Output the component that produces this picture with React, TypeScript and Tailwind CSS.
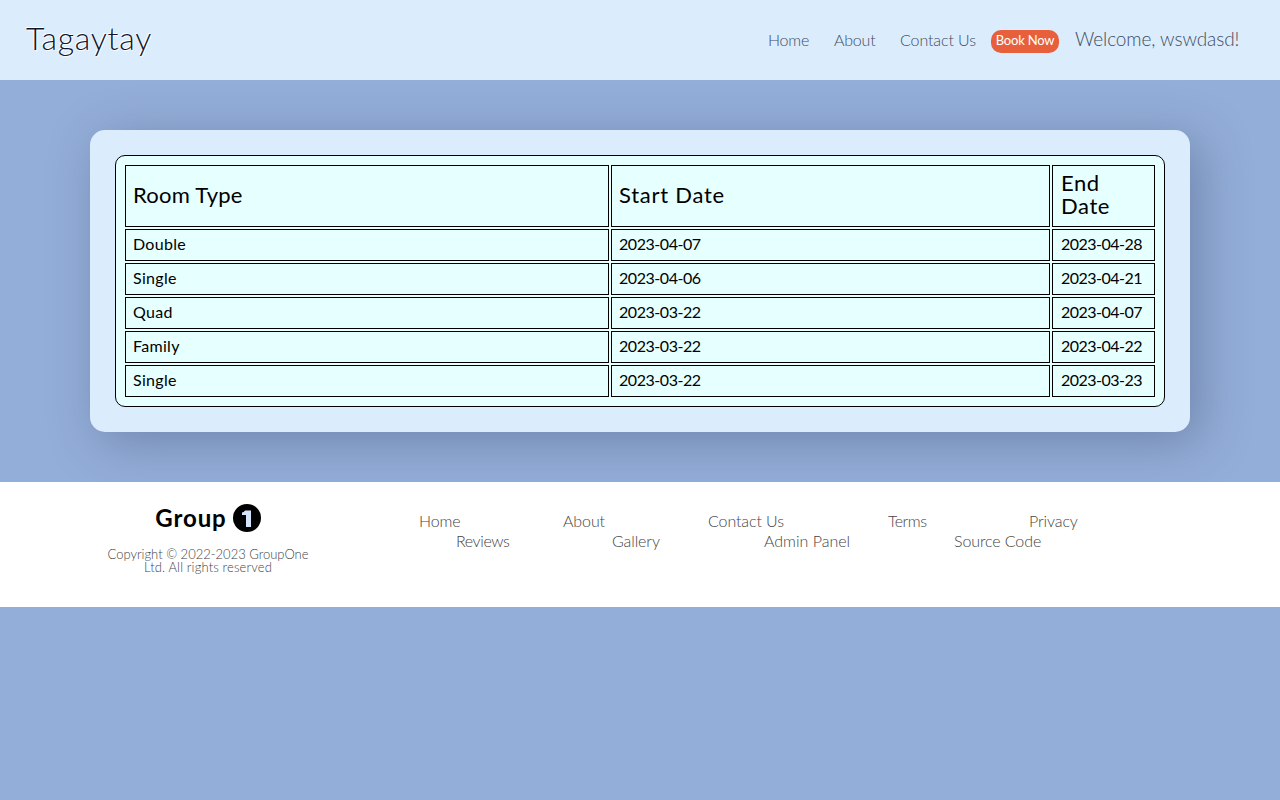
import React from "react";

const rows = [
  ["Double", "2023-04-07", "2023-04-28"],
  ["Single", "2023-04-06", "2023-04-21"],
  ["Quad", "2023-03-22", "2023-04-07"],
  ["Family", "2023-03-22", "2023-04-22"],
  ["Single", "2023-03-22", "2023-03-23"],
];

const rowGrid = "grid grid-cols-[484px_439px_103px] gap-[2px]";
const cell = "flex items-center border border-black whitespace-nowrap";

export default function App() {
  return (
    <div className="min-h-screen bg-[#93aed9] font-['Lato','Liberation_Sans',sans-serif] text-black">
      <header className="flex h-20 items-center bg-[#dbecfd] pl-[26px] font-light whitespace-nowrap text-[#3f4c5e]">
        <div className="w-[742px] pb-1 text-[32px] leading-8 tracking-[0.75px] text-[#10152c] [text-shadow:-1px_-1px_0_#fff,1px_1px_1px_#fff]">
          Tagaytay
        </div>
        <nav className="flex items-center text-[16px] leading-4 tracking-[-0.2px]">
          <a className="w-[66px]">Home</a>
          <a className="w-[66px]">About</a>
          <a className="w-[91px] tracking-[-0.1px]">Contact Us</a>
        </nav>
        <button className="mt-[3px] h-[23px] w-[68px] rounded-[10px] bg-[#e85f3c] pb-[2px] text-[13px] leading-[21px] font-normal tracking-[-0.2px] text-white">
          Book Now
        </button>
        <span className="ml-4 pb-[3px] text-[19px] leading-5 tracking-[-0.1px]">Welcome, wswdasd!</span>
      </header>

      <main className="h-[402px] overflow-hidden px-[90px] pt-[50px]">
        <section className="h-[302px] rounded-[15px] bg-[#dbecfd] p-[25px] shadow-[10px_10px_50px_rgba(50,60,90,0.35)]">
          <div className="flex h-[252px] flex-col gap-[2px] rounded-[10px] border border-black bg-[#e6ffff] p-[9px]">
            <div className={`${rowGrid} h-[62px] text-[22px] leading-[23px]`}>
              <div className={`${cell} pb-1 pl-[7px] tracking-[0.25px]`}>Room Type</div>
              <div className={`${cell} pb-1 pl-[7px] tracking-[0.75px]`}>Start Date</div>
              <div className={`${cell} pb-1 pl-2 tracking-[0.6px]`}>
                <span>
                  End
                  <br />
                  Date
                </span>
              </div>
            </div>
            {rows.map(([room, start, end], index) => (
              <div key={index} className={`${rowGrid} h-8 text-[16px] leading-4`}>
                <div className={`${cell} pb-[2px] pl-[7px] tracking-[0.3px]`}>{room}</div>
                <div className={`${cell} pb-[2px] pl-[7px] tracking-[-0.45px]`}>{start}</div>
                <div className={`${cell} pb-[2px] pl-2 tracking-[-0.5px]`}>{end}</div>
              </div>
            ))}
          </div>
        </section>
      </main>

      <footer className="flex h-[125px] bg-white font-light text-[#444]">
        <div className="ml-[90px] flex w-[236px] flex-col items-center pt-[22px]">
          <div className="flex h-7 items-center gap-[6px] text-[24px] font-bold text-black">
            <span className="tracking-[0.9px]">Group</span>
            <svg className="size-7" viewBox="0 0 28 28">
              <circle cx="14" cy="14" r="14" fill="#000" />
              <path d="M12 6.5h6V23h-5V11H9V8.5Q11 8.3 12 6.5z" fill="#d5e3fb" />
            </svg>
          </div>
          <p className="mt-4 text-center text-[13px] leading-[13px]">
            Copyright © 2022-2023 GroupOne
            <br />
            <span className="tracking-[0.15px]">Ltd. All rights reserved</span>
          </p>
        </div>
        <nav className="ml-[93px] pt-[29px] text-[16px] leading-5 tracking-[-0.1px] whitespace-nowrap">
          <div className="flex">
            <a className="w-36">Home</a>
            <a className="w-[145px]">About</a>
            <a className="w-[180px]">Contact Us</a>
            <a className="w-[141px] tracking-[-0.5px]">Terms</a>
            <a>Privacy</a>
          </div>
          <div className="flex pl-[37px]">
            <a className="w-[156px] tracking-[-0.4px]">Reviews</a>
            <a className="w-[152px]">Gallery</a>
            <a className="w-[190px] tracking-normal">Admin Panel</a>
            <a>Source Code</a>
          </div>
        </nav>
      </footer>
    </div>
  );
}
